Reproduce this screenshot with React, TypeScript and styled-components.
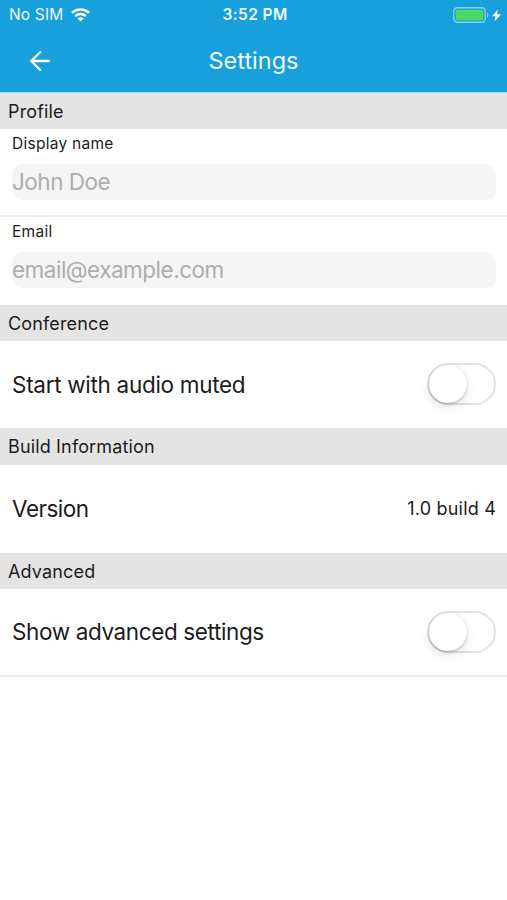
import React from "react";
import styled, { createGlobalStyle } from "styled-components";

const GlobalStyle = createGlobalStyle`
  * { box-sizing: border-box; }
  body { margin: 0; background: #fff; font-family: Inter, "Liberation Sans", sans-serif; color: #1c1c1c; }
`;

const Screen = styled.main`
  display: flex;
  flex-direction: column;
  width: 507px;
  height: 900px;
  overflow: hidden;
  background: #fff;
`;

const Header = styled.header`
  height: 93px;
  background: #17a0db;
  border-bottom: 1px solid #a9d8ee;
  color: #effaff;
`;

const StatusBar = styled.div`
  display: grid;
  grid-template-columns: 1fr auto 1fr;
  align-items: center;
  height: 30px;
  padding: 0 6px 0 9px;
`;

const StatusGroup = styled.div<{ $end?: boolean }>`
  display: flex;
  align-items: center;
  justify-content: ${(p) => (p.$end ? "flex-end" : "flex-start")};
  gap: ${(p) => (p.$end ? "3px" : "8px")};
`;

const Label = styled.span<{ $size: number; $spacing?: number; $weight?: number }>`
  font-size: ${(p) => p.$size}px;
  font-weight: ${(p) => p.$weight ?? 400};
  letter-spacing: ${(p) => p.$spacing ?? 0}px;
  line-height: 1.2;
  white-space: nowrap;
`;

const NavBar = styled.div`
  display: grid;
  grid-template-columns: 80px 1fr 80px;
  align-items: center;
  justify-items: center;
  height: 62px;
`;

const BackButton = styled.button`
  display: flex;
  padding: 0;
  border: 0;
  background: none;
  color: #fff;
`;

const SectionTitle = styled.h2<{ $height?: number }>`
  display: flex;
  flex: none;
  align-items: center;
  height: ${(p) => p.$height ?? 36}px;
  margin: 0;
  padding: 1px 8px 0;
  background: #e4e4e4;
  font-size: 18px;
  font-weight: 400;
  letter-spacing: 0.15px;
  white-space: nowrap;
`;

const Field = styled.label<{ $divided?: boolean }>`
  display: flex;
  flex: none;
  flex-direction: column;
  gap: 10px;
  height: 88px;
  padding: 6px 11px 0 12px;
  border-bottom: ${(p) => (p.$divided ? "2px solid #ececec" : "0")};
`;

const Input = styled.input<{ $spacing: number }>`
  flex: none;
  width: 100%;
  height: 36px;
  padding: 0;
  border: 0;
  border-radius: 10px;
  outline: none;
  background: #f5f5f5;
  font: 400 22.5px Inter, sans-serif;
  letter-spacing: ${(p) => p.$spacing}px;
  &::placeholder { color: #adadad; opacity: 1; }
`;

const Row = styled.div<{ $divided?: boolean; $height?: number }>`
  display: flex;
  flex: none;
  align-items: center;
  justify-content: space-between;
  height: ${(p) => p.$height ?? 88}px;
  padding: 0 11px 0 12px;
  border-bottom: ${(p) => (p.$divided ? "2px solid #ececec" : "0")};
`;

const Track = styled.button`
  display: flex;
  align-items: center;
  width: 69px;
  height: 42px;
  padding: 0;
  border: 2px solid #e2e2e2;
  border-radius: 21px;
  background: #fff;
`;

const Knob = styled.span`
  width: 38px;
  height: 38px;
  border-radius: 50%;
  background: #fff;
  box-shadow: 0 4px 10px rgba(0, 0, 0, 0.13), 0 1px 2px rgba(0, 0, 0, 0.22);
`;

const Toggle = ({ label }: { label: string }) => (
  <Track role="switch" aria-checked={false} aria-label={label}>
    <Knob />
  </Track>
);

const WifiIcon = () => (
  <svg width="19" height="14" viewBox="0 0 19 14" fill="none" stroke="#fff" strokeWidth="2.5">
    <path d="M1 4.9C5.8.4 13.2.4 18 4.9" />
    <path d="M4.2 8.2c3-2.8 7.6-2.8 10.6 0" />
    <path d="M9.5 13.6 6.4 10.5c1.7-1.6 4.5-1.6 6.2 0Z" fill="#fff" stroke="none" />
  </svg>
);

const BatteryIcon = () => (
  <svg width="36" height="16" viewBox="0 0 36 16">
    <rect x=".75" y=".75" width="31.5" height="14.5" rx="3.5" fill="none" stroke="#8bd0ef" strokeWidth="1.3" />
    <rect x="2.7" y="2.7" width="27.6" height="10.6" rx="1.5" fill="#4cd964" />
    <path d="M34 5.5c2 .7 2 4.3 0 5Z" fill="#8bd0ef" />
  </svg>
);

const BoltIcon = () => (
  <svg width="9" height="13" viewBox="0 0 8 13" preserveAspectRatio="none">
    <path d="M5.2.5 0 7.3h3.2L2.2 12.5 8 5.2H4.5Z" fill="#fff" />
  </svg>
);

const BackIcon = () => (
  <svg width="20" height="20" viewBox="0 0 20 20" fill="none" stroke="currentColor" strokeWidth="2.3" strokeLinecap="round" strokeLinejoin="round">
    <path d="M10.3 1 1.2 10l9.1 9M1.5 10h17.5" />
  </svg>
);

export default function App() {
  return (
    <Screen>
      <GlobalStyle />
      <Header>
        <StatusBar>
          <StatusGroup>
            <Label $size={15.5} $spacing={0.15}>No SIM</Label>
            <WifiIcon />
          </StatusGroup>
          <Label $size={15.5} $weight={600} $spacing={0.4}>3:52 PM</Label>
          <StatusGroup $end>
            <BatteryIcon />
            <BoltIcon />
          </StatusGroup>
        </StatusBar>
        <NavBar>
          <BackButton aria-label="Back"><BackIcon /></BackButton>
          <Label $size={23.5}>Settings</Label>
        </NavBar>
      </Header>

      <SectionTitle>Profile</SectionTitle>
      <Field $divided>
        <Label $size={15.5} $spacing={0.27}>Display name</Label>
        <Input $spacing={-0.5} placeholder="John Doe" />
      </Field>
      <Field>
        <Label $size={15.5} $spacing={0.27}>Email</Label>
        <Input $spacing={-0.5} placeholder="email@example.com" />
      </Field>

      <SectionTitle>Conference</SectionTitle>
      <Row $height={86.5}>
        <Label $size={22.5} $spacing={-0.3}>Start with audio muted</Label>
        <Toggle label="Start with audio muted" />
      </Row>

      <SectionTitle $height={37}>Build Information</SectionTitle>
      <Row>
        <Label $size={22.5} $spacing={-0.5}>Version</Label>
        <Label $size={18} $spacing={0.2}>1.0 build 4</Label>
      </Row>

      <SectionTitle>Advanced</SectionTitle>
      <Row $divided>
        <Label $size={22.5} $spacing={-0.38}>Show advanced settings</Label>
        <Toggle label="Show advanced settings" />
      </Row>
    </Screen>
  );
}
